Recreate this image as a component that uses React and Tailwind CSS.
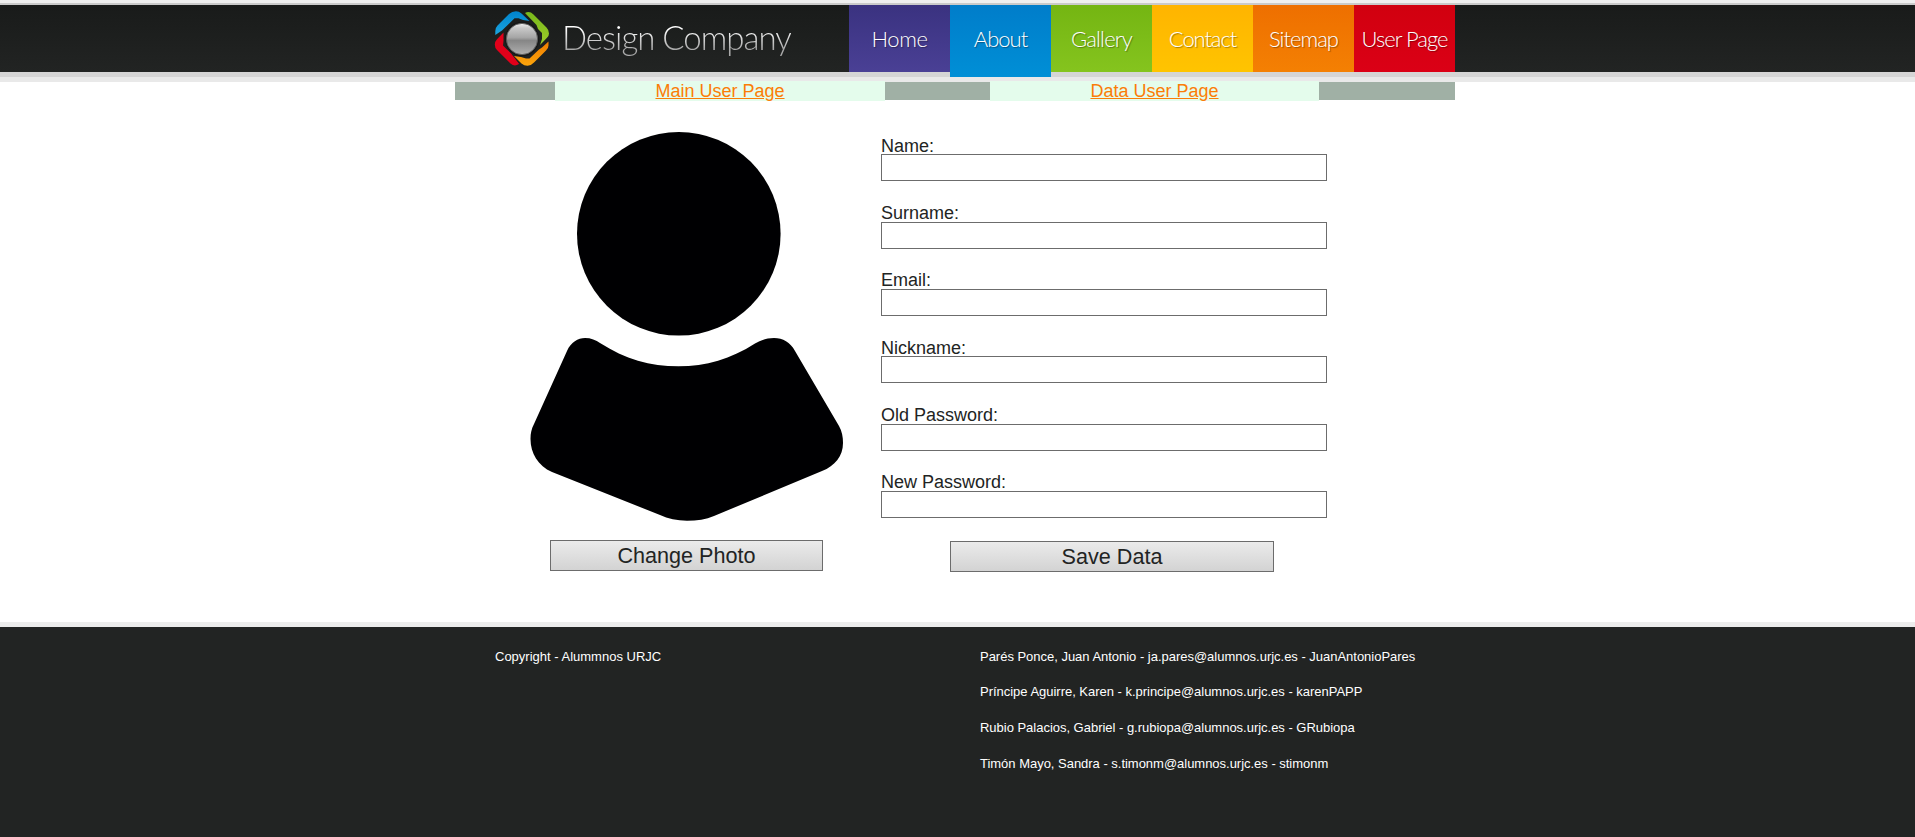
const NAV = [
  { label: 'Home', className: 'h-[67px] tracking-[-0.4px] from-[#3a3280] to-[#4a4095]' },
  { label: 'About', className: 'h-[72px] tracking-[-1px] from-[#007dca] to-[#008fd6]' },
  { label: 'Gallery', className: 'h-[67px] tracking-[-0.8px] from-[#74b512] to-[#85c41e]' },
  { label: 'Contact', className: 'h-[67px] tracking-[-1.1px] from-[#ffb400] to-[#ffc400]' },
  { label: 'Sitemap', className: 'h-[67px] tracking-[-1px] from-[#ee6f00] to-[#f48003]' },
  { label: 'User Page', className: 'h-[67px] tracking-[-1px] from-[#d1000f] to-[#db0016]' },
];

const FIELDS = [
  { label: 'Name:', gap: 'mt-0', height: 'h-[18px]' },
  { label: 'Surname:', gap: 'mt-[22px]', height: 'h-[19px]' },
  { label: 'Email:', gap: 'mt-[21px]', height: 'h-[19px]' },
  { label: 'Nickname:', gap: 'mt-[22px]', height: 'h-[18px]' },
  { label: 'Old Password:', gap: 'mt-[22px]', height: 'h-[19px]' },
  { label: 'New Password:', gap: 'mt-[21px]', height: 'h-[19px]' },
];

const TEAM = [
  'Parés Ponce, Juan Antonio - ja.pares@alumnos.urjc.es - JuanAntonioPares',
  'Príncipe Aguirre, Karen - k.principe@alumnos.urjc.es - karenPAPP',
  'Rubio Palacios, Gabriel - g.rubiopa@alumnos.urjc.es - GRubiopa',
  'Timón Mayo, Sandra - s.timonm@alumnos.urjc.es - stimonm',
];

function Logo() {
  return (
    <svg className="h-[67px] w-[75px] shrink-0" viewBox="0 5 75 67">
      <defs>
        <linearGradient id="ball" x1="0" y1="0" x2="0" y2="1">
          <stop offset="0" stopColor="#f0f0f0" />
          <stop offset="0.15" stopColor="#c8c8c8" />
          <stop offset="0.45" stopColor="#a6a6a6" />
          <stop offset="0.55" stopColor="#868686" />
          <stop offset="1" stopColor="#b0b0b0" />
        </linearGradient>
        <linearGradient id="blue" x1="0" y1="0" x2="0" y2="1">
          <stop offset="0" stopColor="#0083cc" />
          <stop offset="1" stopColor="#1aa5e0" />
        </linearGradient>
        <linearGradient id="green" x1="0" y1="0" x2="0" y2="1">
          <stop offset="0" stopColor="#78b81a" />
          <stop offset="1" stopColor="#9ccb2a" />
        </linearGradient>
        <linearGradient id="orange" x1="0" y1="0" x2="0" y2="1">
          <stop offset="0" stopColor="#f07c00" />
          <stop offset="1" stopColor="#fba50c" />
        </linearGradient>
      </defs>
      <path fill="url(#blue)" d="M10.3 35V31Q10.300 27.800 12.500 25.500L24 14Q27 11.200 31 11.200Q34 11.200 36.500 13.500L44.500 21L38 20L33.500 18.300H29.500L18 29.500L17 30.500Z" />
      <path fill="url(#green)" d="M40 13Q44.500 10.500 48.500 14.500L61.500 27.500Q64 30 64 33.500Q64 36 62 37.800L55 45L57 39V33L53 29L51.500 25Z" />
      <path fill="url(#orange)" d="M63.500 41.500V45.500Q63.500 48 61 50.500L49 62.500Q46 65.800 42.500 65.800Q39 65.800 36.500 63.500L29 56L36 57L41 58.500H44.500L54 49.500L57 47.500Z" />
      <path fill="#e1001a" d="M18.500 32.500V41L18 45.500L22.500 50L34 64Q29.500 67 25.500 63.500L12 50Q9.800 47.800 9.800 44.500Q9.800 41.500 12 39.200Z" />
      <path fill="#e1001a" d="M22 49.500L26 53.500L34 64L27 62Z" />
      <circle cx="37" cy="39" r="17.200" fill="#161717" />
      <circle cx="37" cy="39" r="15.600" fill="url(#ball)" stroke="#5c5c5c" strokeWidth="0.900" />
    </svg>
  );
}

function Avatar() {
  return (
    <svg className="h-[396px] w-[330px]" viewBox="520 130 330 396">
      <circle cx="678.800" cy="233.800" r="101.800" fill="#000002" />
      <path
        fill="#000002"
        d="M567 351C571 342 578 338 585 338C591 338 596 340 600 343C625 359 650 366.300 678.500 366.300C706 366.300 731 359 755 343.500C761 340 767 338 774 338C783 338 790 342 795 351L839 426C842 431 843 437 843 443C843 456 835 466 822 471L714 516C706 519.500 697 520.700 687 520.700C677 520.700 668 519 660 515L552 472C538 466 530.500 453 530.500 439C530.500 433 531.500 429 534 424Z"
      />
    </svg>
  );
}

export default function App() {
  return (
    <div className="flex h-[837px] w-full flex-col overflow-hidden bg-white font-['Liberation_Sans',Arial,sans-serif] text-[#222423]">
      <header className="h-[82px] border-t-[3px] border-[#efefef] bg-[#e9e9e9]">
        <div className="h-[74px] border-t-2 border-[#cacaca] bg-[#d5d5d5]">
          <div className="flex h-[67px] bg-linear-to-b from-[#191b1a] to-[#222423] pl-[485px]">
            <Logo />
            <div className="w-[289px] pl-[2px] pt-[6px] font-['Lato',sans-serif] text-[33px] leading-[52px] font-light tracking-[-1px] whitespace-nowrap">
              <span className="bg-linear-to-b from-white from-30% to-[#aaaaaa] to-80% bg-clip-text text-transparent">Design Company</span>
            </div>
            <nav className="flex items-start">
              {NAV.map(({ label, className }) => (
                <a key={label} href="#" className={`flex w-[101px] justify-center bg-linear-to-b pt-[20px] font-['Lato',sans-serif] text-[22px] leading-[28px] font-light whitespace-nowrap text-white [text-shadow:1px_1px_1px_rgba(0,0,0,0.35)] ${className}`}>
                  {label}
                </a>
              ))}
            </nav>
          </div>
        </div>
      </header>

      <div className="ml-[455px] flex h-[18px] w-[1000px] items-center bg-[#a0b0a5] pl-[100px] text-[18px] leading-[20px]">
        <div className="h-[20px] w-[330px] bg-[#e4fcec] text-center text-[#fb7d06] underline">Main User Page</div>
        <div className="ml-[105px] h-[20px] w-[329px] bg-[#e4fcec] text-center text-[#fb7d06] underline">Data User Page</div>
      </div>

      <main className="flex h-[522px] shrink-0 pl-[520px] pt-[30px]">
        <section className="flex w-[361px] flex-col">
          <Avatar />
          <button className="mt-[14px] ml-[30px] h-[31px] w-[273px] border border-[#6c6c6c] bg-linear-to-b from-[#ebebeb] to-[#d3d3d3] text-[21.6px] leading-[29px]">Change Photo</button>
        </section>
        <form className="flex w-[446px] flex-col pt-[6px]">
          {FIELDS.map(({ label, gap, height }) => (
            <label key={label} className={`block text-[18px] leading-[20px] ${gap}`}>
              <span className={`block ${height}`}>{label}</span>
              <input className="block h-[27px] w-full border border-[#6c6c6c] bg-white px-1 outline-none" />
            </label>
          ))}
          <button type="button" className="mt-[23px] ml-[69px] h-[31px] w-[324px] shrink-0 border border-[#6c6c6c] bg-linear-to-b from-[#ebebeb] to-[#d3d3d3] text-[21.6px] leading-[29px]">Save Data</button>
        </form>
      </main>

      <footer className="flex flex-1 border-t-[5px] border-[#ececec] bg-[#222423] pl-[495px] pt-[20px] text-[13px] leading-[18px] text-white">
        <p className="w-[485px] pt-px">Copyright - Alummnos URJC</p>
        <ul className="flex flex-col gap-[18px]">
          {TEAM.map((line, i) => (
            <li key={line} className={`tracking-[-0.02px] whitespace-nowrap ${i === 0 ? 'relative top-px' : ''}`}>{line}</li>
          ))}
        </ul>
      </footer>
    </div>
  );
}
